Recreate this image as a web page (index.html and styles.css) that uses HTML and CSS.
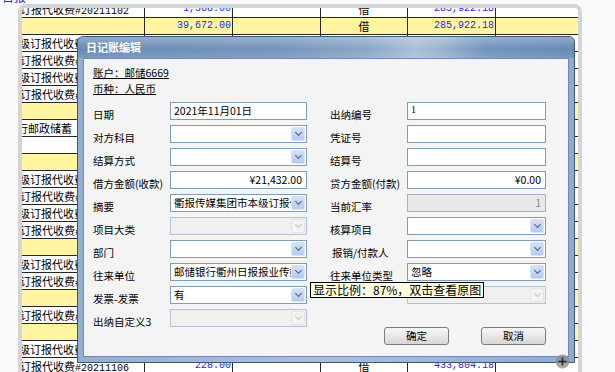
FILE: index.html
```html
<!DOCTYPE html>
<html lang="zh-CN">
<head>
<meta charset="utf-8">
<title>日记账编辑</title>
<link rel="stylesheet" href="styles.css">
</head>
<body>
<div class="toplink"><span>日报</span></div>
<div class="viewer">
  <div class="shot">
    <div class="sheet">
      <div class="row"><div class="c1 d"><span>订报代收费<i>#20211102</i></span></div><div class="num">1,368.00</div><div></div><div class="ctr">借</div><div class="num">285,922.18</div><div></div></div>
      <div class="row y"><div class="c1"></div><div class="num">39,672.00</div><div></div><div class="ctr">借</div><div class="num">285,922.18</div><div></div></div>
      <div class="row"><div class="c1 k"><span>级订报代收费</span></div><div></div><div></div><div></div><div></div><div></div></div>
      <div class="row"><div class="c1 d"><span>订报代收费<i>#</i></span></div><div></div><div></div><div></div><div></div><div></div></div>
      <div class="row"><div class="c1 k"><span>级订报代收费</span></div><div></div><div></div><div></div><div></div><div></div></div>
      <div class="row"><div class="c1 d"><span>订报代收费<i>#</i></span></div><div></div><div></div><div></div><div></div><div></div></div>
      <div class="row y"><div class="c1"></div><div></div><div></div><div></div><div></div><div></div></div>
      <div class="row"><div class="c1 m"><span>行邮政储蓄</span></div><div></div><div></div><div></div><div></div><div></div></div>
      <div class="row"><div class="c1"></div><div></div><div></div><div></div><div></div><div></div></div>
      <div class="row y"><div class="c1"></div><div></div><div></div><div></div><div></div><div></div></div>
      <div class="row"><div class="c1 k"><span>级订报代收费</span></div><div></div><div></div><div></div><div></div><div></div></div>
      <div class="row"><div class="c1 d"><span>订报代收费<i>#</i></span></div><div></div><div></div><div></div><div></div><div></div></div>
      <div class="row"><div class="c1 k"><span>级订报代收费</span></div><div></div><div></div><div></div><div></div><div></div></div>
      <div class="row"><div class="c1 d"><span>订报代收费<i>#</i></span></div><div></div><div></div><div></div><div></div><div></div></div>
      <div class="row y"><div class="c1"></div><div></div><div></div><div></div><div></div><div></div></div>
      <div class="row"><div class="c1 k"><span>级订报代收费</span></div><div></div><div></div><div></div><div></div><div></div></div>
      <div class="row"><div class="c1 d"><span>订报代收费<i>#</i></span></div><div></div><div></div><div></div><div></div><div></div></div>
      <div class="row y"><div class="c1"></div><div></div><div></div><div></div><div></div><div></div></div>
      <div class="row"><div class="c1 d"><span>订报代收费<i>#</i></span></div><div></div><div></div><div></div><div></div><div></div></div>
      <div class="row y"><div class="c1"></div><div></div><div></div><div></div><div></div><div></div></div>
      <div class="row"><div class="c1 k"><span>级订报代收费</span></div><div></div><div></div><div></div><div></div><div></div></div>
      <div class="row"><div class="c1 d"><span>订报代收费<i>#20211106</i></span></div><div class="num">228.00</div><div></div><div class="ctr">借</div><div class="num">433,804.18</div><div></div></div>
    </div>

    <div class="dialog">
      <div class="dlg-title">日记账编辑</div>
      <div class="dlg-body">
        <div class="info">
          <div><span>账户：邮储6669</span></div>
          <div><span>币种：人民币</span></div>
        </div>
        <div class="form">
          <div class="col">
            <div class="fields">
              <label>日期</label>
              <div class="inp">2021年11月01日</div>
              <label>对方科目</label>
              <div class="inp sel"><span class="v"></span><span class="btn"></span></div>
              <label>结算方式</label>
              <div class="inp sel"><span class="v"></span><span class="btn"></span></div>
              <label>借方金额(收款)</label>
              <div class="inp right">¥21,432.00</div>
              <label>摘要</label>
              <div class="inp sel"><span class="v">衢报传媒集团市本级订报代收费#20211101</span><span class="btn"></span></div>
              <label>项目大类</label>
              <div class="inp sel off"><span class="v"></span><span class="btn"></span></div>
              <label>部门</label>
              <div class="inp sel"><span class="v"></span><span class="btn"></span></div>
              <label>往来单位</label>
              <div class="inp sel"><span class="v">邮储银行衢州日报报业传媒集团</span><span class="btn"></span></div>
              <label>发票-发票</label>
              <div class="inp sel"><span class="v">有</span><span class="btn"></span></div>
              <label>出纳自定义3</label>
              <div class="inp sel off"><span class="v"></span><span class="btn"></span></div>
            </div>
          </div>
          <div class="col r">
            <div class="fields">
              <label>出纳编号</label>
              <div class="inp one">1</div>
              <label>凭证号</label>
              <div class="inp"></div>
              <label>结算号</label>
              <div class="inp"></div>
              <label>贷方金额(付款)</label>
              <div class="inp right">¥0.00</div>
              <label>当前汇率</label>
              <div class="inp right ro">1</div>
              <label>核算项目</label>
              <div class="inp sel"><span class="v"></span><span class="btn"></span></div>
              <label class="ind">报销/付款人</label>
              <div class="inp sel"><span class="v"></span><span class="btn"></span></div>
              <label>往来单位类型</label>
              <div class="inp sel"><span class="v">忽略</span><span class="btn"></span></div>
              <label></label>
              <div class="inp sel off"><span class="v"></span><span class="btn"></span></div>
            </div>
            <div class="btns">
              <div class="pbtn">确定</div>
              <div class="pbtn">取消</div>
            </div>
          </div>
        </div>
      </div>
    </div>

    <div class="tip">显示比例：87%，双击查看原图</div>
    <div class="zoomer">
      <svg width="15" height="15" viewBox="0 0 15 15"><circle cx="7.5" cy="7.5" r="7" fill="#8c8c8c" fill-opacity="0.75"/><path d="M7.5 3.5v8M3.5 7.5h8" stroke="#2a2a2a" stroke-width="1.6"/></svg>
    </div>
  </div>
</div>
</body>
</html>
```

FILE: styles.css
```css
html, body {
  margin: 0;
  height: 372px;
  overflow: hidden;
}
body {
  background: #f8f9fb;
  font-family: "Noto Sans CJK SC", "Noto Sans", sans-serif;
  font-size: 10.5px;
  color: #000;
}
.toplink {
  height: 4px;
  overflow: hidden;
  padding-left: 2px;
}
.toplink span {
  display: block;
  margin-top: -9px;
  font-size: 12px;
  line-height: 12px;
  color: #2b2bd0;
}
.viewer {
  margin-left: 18px;
  width: 556px;
  height: 368px;
  border: 4px solid #d4d4d4;
  border-bottom: 0;
  border-radius: 8px 8px 0 0;
  background: #fff;
}
.shot {
  position: relative;
  width: 556px;
  height: 368px;
  overflow: hidden;
  border-radius: 4px 4px 0 0;
}

/* background spreadsheet */
.sheet { margin-top: -7px; }
.row {
  display: grid;
  grid-template-columns: 123px 88px 88px 87px 88px 1fr;
  height: 17px;
  box-sizing: border-box;
  border-bottom: 1px solid #262626;
  background: #fff;
}
.row.y { background: #fff4a0; }
.row > div {
  border-right: 1px solid #262626;
  overflow: hidden;
  white-space: nowrap;
  line-height: 16px;
}
.row > div:last-child { border-right: 0; }
.c1 { font-size: 11px; }
.c1 span { display: block; }
.c1 i {
  font-style: normal;
  font-family: "Liberation Mono", monospace;
  font-size: 10px;
}
.c1.d span { margin-left: -2px; }
.c1.k span { margin-left: -3px; }
.c1.m span { margin-left: -5px; }
.num {
  text-align: right;
  color: #2626ee;
  font-family: "Liberation Mono", monospace;
  font-size: 10px;
  padding-right: 1px;
}
.ctr { text-align: center; font-size: 11px; }

/* dialog window */
.dialog {
  position: absolute;
  left: 55px;
  top: 28px;
  width: 498px;
  height: 327px;
  box-sizing: border-box;
  border: 1px solid #3f5676;
  border-radius: 6px 6px 0 0;
  background: linear-gradient(90deg, #93afd1, #a9c0dc 50%, #8eabcf);
  display: flex;
  flex-direction: column;
}
.dlg-title {
  height: 21px;
  line-height: 21px;
  padding-left: 8px;
  color: #fff;
  font-weight: bold;
  font-size: 11px;
  border-radius: 5px 5px 0 0;
  background:
    linear-gradient(180deg, rgba(255,255,255,0.28), rgba(255,255,255,0.05) 45%, rgba(0,0,0,0) 60%, rgba(255,255,255,0.12)),
    linear-gradient(90deg, #6a8bb5 0%, #7594bb 40%, #8aa6c7 58%, #a9bfd6 68%, #98b1cc 74%, #7294bd 82%, #6889b4 100%);
}
.dlg-body {
  flex: 1;
  margin: 0 5px 5px;
  border: 1px solid #6e8cb2;
  background: #f4f4f4;
  padding: 6px 0 0 9px;
}
.info div { line-height: 16px; }
.info span { text-decoration: underline; }

.form {
  display: flex;
  gap: 23px;
  margin-top: 5px;
}
.col {
  display: flex;
  flex-direction: column;
}
.fields {
  display: grid;
  grid-template-columns: 77px 137px;
  row-gap: 3px;
  align-items: start;
}
.col.r .fields { grid-template-columns: 77px 139px; }
.fields label {
  padding-top: 6px;
  line-height: 14px;
  white-space: nowrap;
}
.fields label.ind { padding-left: 2px; }
.inp {
  height: 18px;
  box-sizing: border-box;
  border: 1px solid #7f9db9;
  background: #fff;
  line-height: 16px;
  padding: 0 3px;
  white-space: nowrap;
  overflow: hidden;
}
.inp.right { text-align: right; padding-right: 4px; }
.inp.one { font-family: "Liberation Serif", serif; font-size: 10px; line-height: 13px; }
.inp.ro {
  background: #e8e8e8;
  border-color: #9fb2c9;
  color: #8a8a8a;
}
.sel {
  display: flex;
  align-items: center;
  padding: 0 1px 0 3px;
}
.sel .v {
  flex: 1;
  overflow: hidden;
  white-space: nowrap;
}
.sel .btn {
  width: 14px;
  height: 14px;
  box-sizing: border-box;
  border: 1px solid #d7e3f6;
  border-radius: 2px;
  background: linear-gradient(180deg, #d3e1f7, #b5cbee);
  display: flex;
  align-items: center;
  justify-content: center;
}
.sel .btn::after {
  content: "";
  width: 4px;
  height: 4px;
  margin-top: -3px;
  border-right: 1.5px solid #4b5f87;
  border-bottom: 1.5px solid #4b5f87;
  transform: rotate(45deg);
}
.sel.off {
  background: #f0f0f0;
  border-color: #b4c4d8;
}
.sel.off .btn {
  background: #f3f3f3;
  border-color: #e4e4e4;
}
.sel.off .btn::after {
  border-color: #c4c4c4;
}

.btns {
  display: flex;
  justify-content: flex-end;
  gap: 32px;
  margin-top: 23px;
}
.pbtn {
  width: 65px;
  height: 18px;
  box-sizing: border-box;
  border: 1px solid #7d7d7d;
  border-radius: 3px;
  background: linear-gradient(180deg, #f7f7f7, #e8e8e8 50%, #d6d6d6);
  text-align: center;
  line-height: 16px;
}

/* viewer overlays */
.tip {
  position: absolute;
  left: 288px;
  top: 274px;
  background: #ffffe1;
  border: 1px solid #000;
  font-size: 12px;
  line-height: 14px;
  padding: 0 2px;
  white-space: nowrap;
}
.zoomer {
  position: absolute;
  left: 533px;
  top: 346px;
  width: 15px;
  height: 15px;
}
.zoomer svg { display: block; }
```
